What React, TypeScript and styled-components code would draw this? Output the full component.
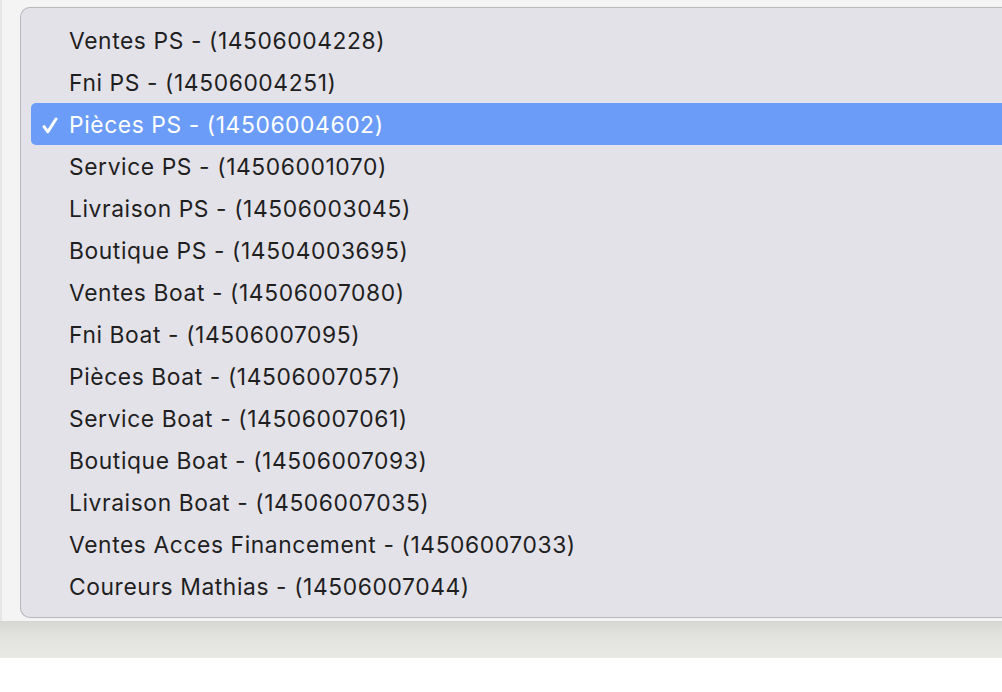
import React from "react";
import styled, { createGlobalStyle } from "styled-components";

const Global = createGlobalStyle`
  html, body { margin: 0; padding: 0; background: #ffffff; overflow: hidden; }
  body { font-family: Inter, "Noto Sans", "Liberation Sans", sans-serif; }
`;

const Page = styled.div`
  width: 1002px;
  height: 692px;
  display: flex;
  flex-direction: column;
  overflow: hidden;
  background: #ffffff;
`;

const Backdrop = styled.div`
  height: 621px;
  flex: none;
  box-sizing: border-box;
  padding: 7px 0 0 18px;
  background: #f4f4f4;
  border-left: 2px solid #e6e6e6;
`;

const Shelf = styled.div`
  height: 37px;
  flex: none;
  background: linear-gradient(#d6d6d2, #e2e2de 40%, #e8e8e4);
`;

const Menu = styled.ul`
  list-style: none;
  margin: 0;
  width: 1040px;
  box-sizing: border-box;
  padding: 11px 0 10px 10px;
  background: #e4e2e9;
  border: 1px solid #b9b9bd;
  border-right: none;
  border-radius: 10px 0 0 10px;
  box-shadow: 0 0 1px rgba(0, 0, 0, 0.08);
  display: flex;
  flex-direction: column;
`;

const Item = styled.li<{ $selected?: boolean }>`
  height: 42px;
  display: flex;
  align-items: center;
  border-radius: 5px 0 0 5px;
  background: ${(p) => (p.$selected ? "#6a9cf8" : "transparent")};
  color: ${(p) => (p.$selected ? "#ffffff" : "#1f1f1f")};
  font-size: 22.8px;
  letter-spacing: 0.6px;
`;

const Check = styled.span`
  width: 38px;
  flex: none;
  display: flex;
  justify-content: flex-end;
  padding: 3px 11px 0 0;
  box-sizing: border-box;
`;

const Label = styled.span`
  white-space: nowrap;
`;

const items = [
  "Ventes PS - (14506004228)",
  "Fni PS - (14506004251)",
  "Pièces PS - (14506004602)",
  "Service PS - (14506001070)",
  "Livraison PS - (14506003045)",
  "Boutique PS - (14504003695)",
  "Ventes Boat - (14506007080)",
  "Fni Boat - (14506007095)",
  "Pièces Boat - (14506007057)",
  "Service Boat - (14506007061)",
  "Boutique Boat - (14506007093)",
  "Livraison Boat - (14506007035)",
  "Ventes Acces Financement - (14506007033)",
  "Coureurs Mathias - (14506007044)",
];

const CheckMark = () => (
  <svg width="16" height="17" viewBox="0 0 16 17" fill="none">
    <path
      d="M2 9.6 L5.9 14.8 L14 2"
      stroke="#ffffff"
      strokeWidth="3"
      strokeLinecap="round"
      strokeLinejoin="round"
    />
  </svg>
);

export default function App() {
  return (
    <>
      <Global />
      <Page>
        <Backdrop>
          <Menu>
            {items.map((t, i) => {
              const sel = i === 2;
              return (
                <Item key={t} $selected={sel}>
                  <Check>{sel ? <CheckMark /> : null}</Check>
                  <Label>{t}</Label>
                </Item>
              );
            })}
          </Menu>
        </Backdrop>
        <Shelf />
      </Page>
    </>
  );
}
